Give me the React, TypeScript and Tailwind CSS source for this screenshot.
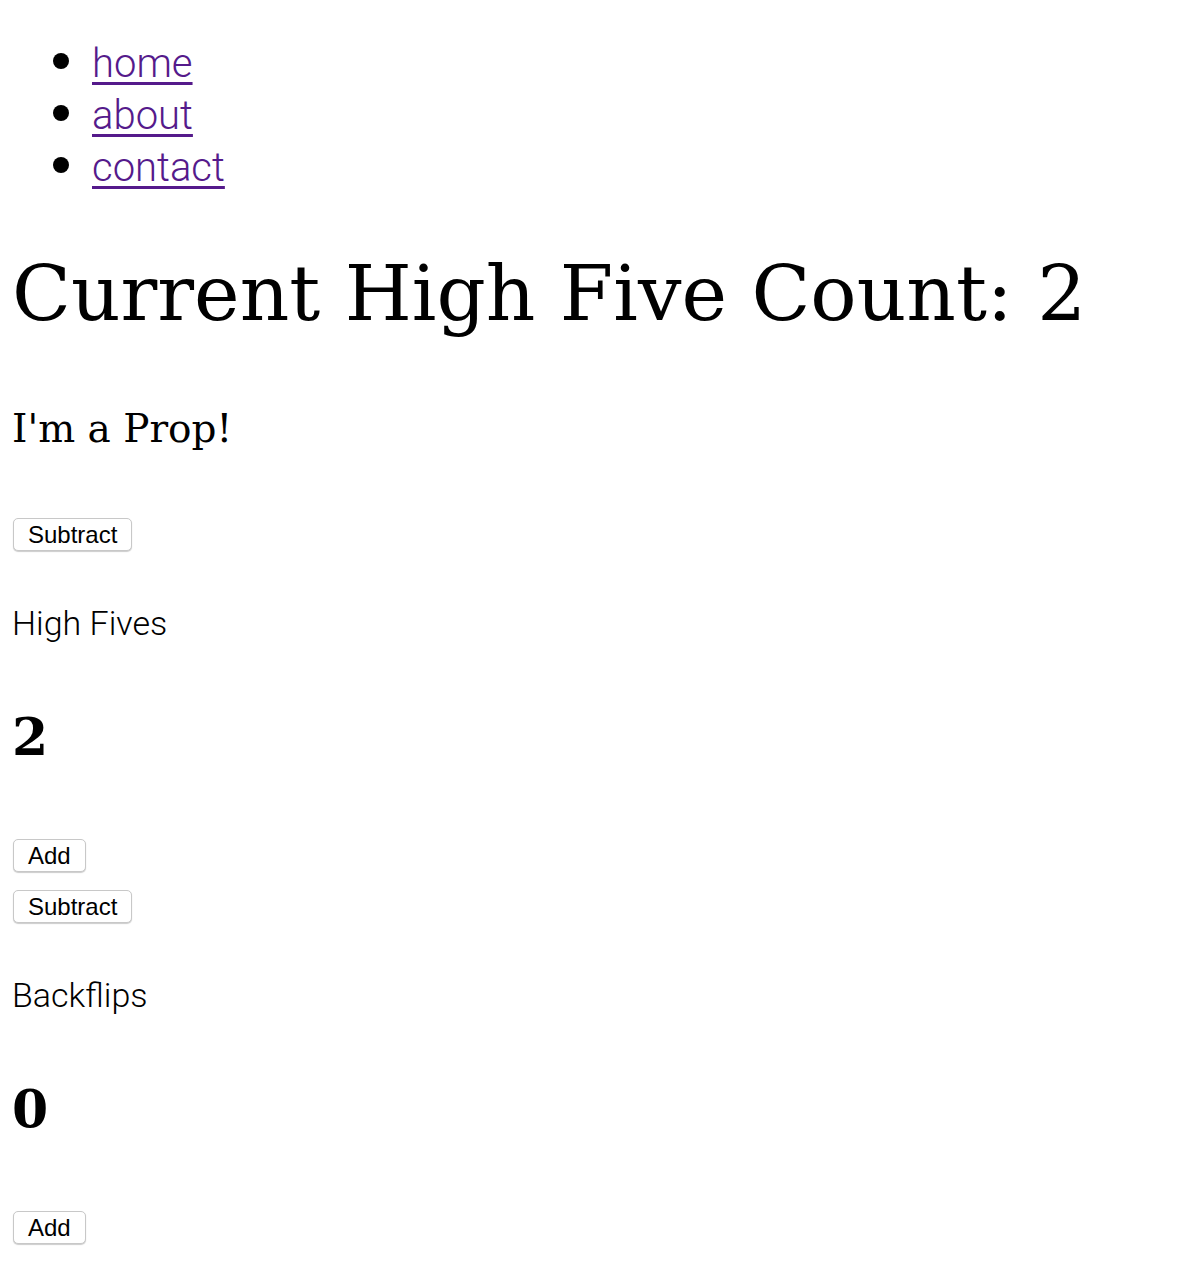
import { useState } from "react";

const serif = "font-['DejaVu_Serif',serif]";
const roboto = "font-['Roboto',sans-serif]";

function Counter({ label, start }: { label: string; start: number }) {
    const [count, setCount] = useState(start)
    const btn = "font-['Liberation_Sans',sans-serif] text-[24px] leading-[27px] text-black bg-white border border-[#c8c8c8] rounded-[5px] shadow-[0_1px_1px_rgba(0,0,0,0.2)] px-[14px] pt-[2px] pb-[2px] self-start ml-px"
    return <div className="flex flex-col">
        <button className={btn} onClick={() => setCount(count - 1)}>Subtract</button>
        <p className={`${roboto} font-light text-[34px] leading-[40px] mt-[52px]`}>{label}</p>
        <h2 className={`${serif} font-bold text-[52px] leading-[60px] mt-[64px]`}>{count}</h2>
        <button className={`${btn} mt-[72px]`} onClick={() => setCount(count + 1)}>Add</button>
    </div>
}

export default function App() {
    return <div className="bg-white text-black min-h-[1272px] px-3">
        <ul className={`${roboto} font-light text-[40px] leading-[52px] list-disc pl-[80px] pt-[38px] marker:text-[52px] marker:leading-[0px]`}>
            {["home", "about", "contact"].map((link) => {
                return <li key={link}><a href="#" className="text-[#551a8b] underline underline-offset-[5px] decoration-[3px]">{link}</a></li>
            })}
        </ul>
        <h1 className={`${serif} text-[77px] leading-[90px] mt-[55px]`}>Current High Five Count: 2</h1>
        <h2 className={`${serif} text-[39px] leading-[44px] mt-[68px]`}>I'm a Prop!</h2>
        <div className="flex flex-col gap-[18px] mt-[67px]">
            <Counter label="High Fives" start={2} />
            <Counter label="Backflips" start={0} />
        </div>
    </div>
}
